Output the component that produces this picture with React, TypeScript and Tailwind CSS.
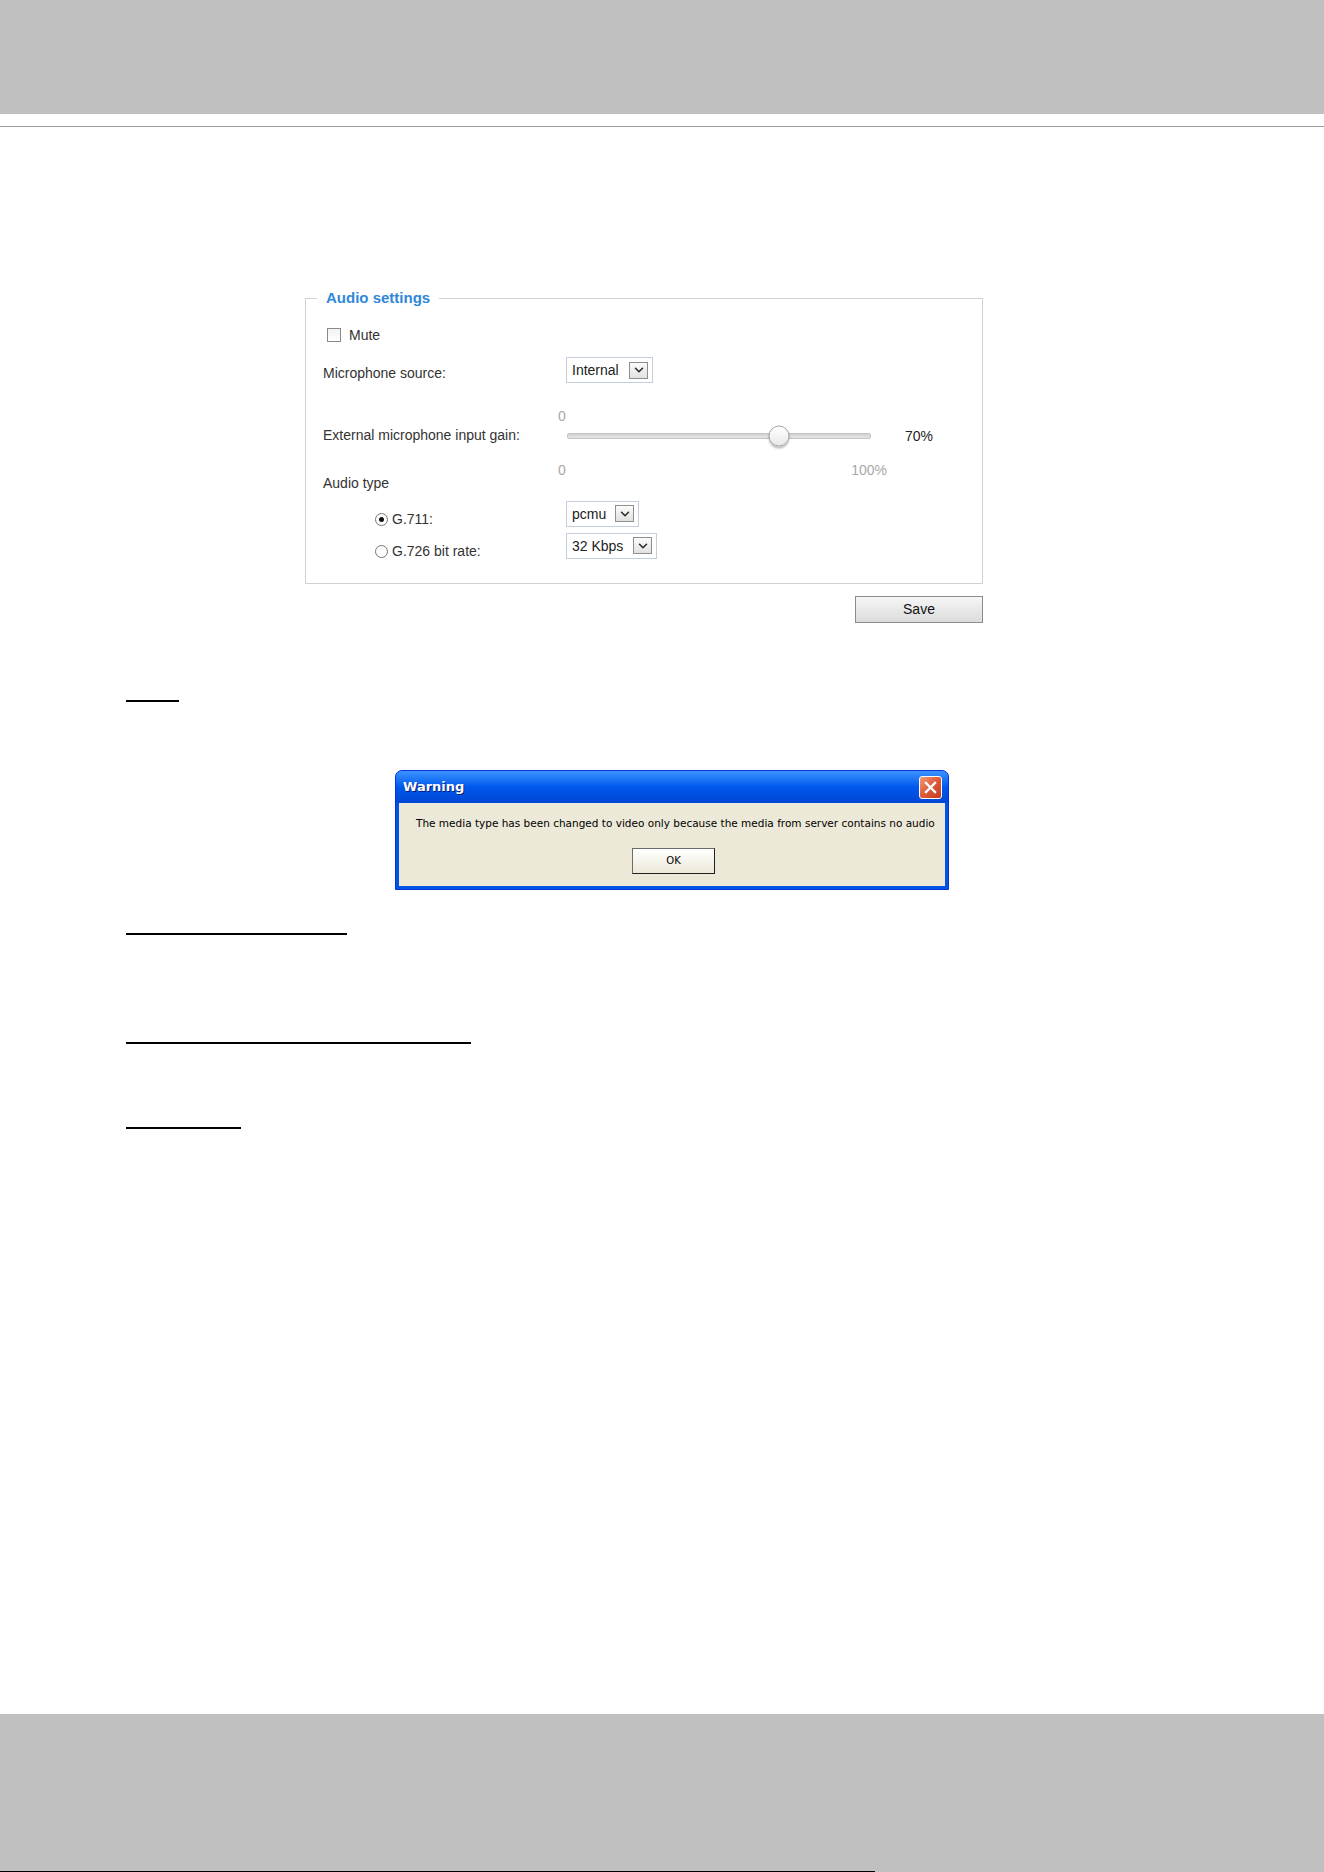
import { ChevronDown } from 'lucide-react'

const labelFont = { fontFamily: '"Liberation Sans", Arial, sans-serif' }

const DropButton = () => (
	<span className="flex h-[17px] w-[19px] items-center justify-center border border-[#8e8f8f] bg-gradient-to-b from-[#fbfbfb] to-[#e1e1e1]">
		<ChevronDown size={14} strokeWidth={2.6} className="text-[#2a2a2a]" />
	</span>
)

const Select = ({ value, width }: { value: string; width: string }) => (
	<div
		className={`flex h-[26px] items-center justify-between border border-[#c3cddc] bg-white pl-[5px] pr-[4px] text-[14px] text-[#222] ${width}`}
	>
		<span>{value}</span>
		<DropButton />
	</div>
)

const Radio = ({ checked }: { checked?: boolean }) => (
	<span className="flex h-[13px] w-[13px] items-center justify-center rounded-full border border-[#767676] bg-white">
		{checked && <span className="h-[5px] w-[5px] rounded-full bg-[#111]" />}
	</span>
)

const GainSlider = ({ value }: { value: number }) => (
	<div className="flex h-[24px] items-center">
		<div className="relative ml-[9px] h-[6px] w-[304px] rounded-[2px] border border-[#c4c4c4] bg-gradient-to-b from-[#d2d2d2] to-[#e6e6e6]">
			<span
				className="absolute top-1/2 h-[21px] w-[21px] -translate-x-1/2 -translate-y-1/2 rounded-full border border-[#a4a4a4] bg-gradient-to-b from-white to-[#e9e9e9] shadow-[0_2px_2px_rgba(0,0,0,0.25)]"
				style={{ left: `${value}%` }}
			/>
		</div>
		<span className="ml-[34px] text-[#222]">{value}%</span>
	</div>
)

const AudioSettings = () => (
	<div className="ml-[305px] w-[678px]" style={labelFont}>
		<fieldset className="border border-[#d2d2d2] pb-[24px] pl-[11px]">
			<legend className="px-[9px] text-[15px] font-bold leading-4 text-[#2f87d9]">
				Audio settings
			</legend>

			<div className="pl-[6px] text-[14px] leading-4 text-[#333]">
				<div className="mt-[19px] flex h-[20px] items-center">
					<span className="ml-[4px] h-[14px] w-[14px] border border-[#8a8a8a] bg-gradient-to-b from-[#f2f2f2] to-white" />
					<span className="ml-[8px]">Mute</span>
				</div>

				<div className="mt-[12px] flex items-center">
					<span className="mt-[6px] w-[243px]">Microphone source:</span>
					<Select value="Internal" width="w-[87px]" />
				</div>

				<div className="flex pt-[25px]">
					<div className="flex w-[235px] items-center pb-[16px]">
						<span>External microphone input gain:</span>
					</div>
					<div className="flex flex-col">
						<span className="text-[#a8a8a8]">0</span>
						<GainSlider value={70} />
						<div className="mt-[14px] flex w-[329px] justify-between text-[#a8a8a8]">
							<span>0</span>
							<span>100%</span>
						</div>
					</div>
				</div>

				<div className="-mt-[3px]">Audio type</div>

				<div className="mt-[9px] flex items-center">
					<div className="mt-[11px] flex w-[243px] items-center pl-[52px]">
						<Radio checked />
						<span className="ml-[4px]">G.711:</span>
					</div>
					<Select value="pcmu" width="w-[73px]" />
				</div>

				<div className="mt-[5px] flex items-center">
					<div className="mt-[11px] flex w-[243px] items-center pl-[52px]">
						<Radio />
						<span className="ml-[4px]">G.726 bit rate:</span>
					</div>
					<Select value="32 Kbps" width="w-[91px]" />
				</div>
			</div>
		</fieldset>

		<div className="mt-[12px] flex justify-end">
			<button className="h-[27px] w-[128px] border border-[#8c8c8c] bg-gradient-to-b from-[#f6f6f6] to-[#dcdcdc] text-[14px] text-[#111]">
				Save
			</button>
		</div>
	</div>
)

const WarningDialog = () => (
	<div className="ml-[395px] w-[554px] overflow-hidden rounded-t-[7px] border border-[#0831d9] bg-[#0055e5]">
		<div className="flex h-[32px] items-center justify-between bg-gradient-to-b from-[#3a93ff] via-[#0058ee] to-[#0046d4] pl-[7px] pr-[6px]">
			<span
				className="text-[13px] font-bold text-white [text-shadow:1px_1px_0_#0a1c78]"
				style={{ fontFamily: '"DejaVu Sans", Verdana, sans-serif' }}
			>
				Warning
			</span>
			<span className="flex h-[23px] w-[23px] items-center justify-center rounded-[3px] border border-white bg-gradient-to-br from-[#f09a7a] via-[#dd5a3a] to-[#c23a1f]">
				<svg width="13" height="13" viewBox="0 0 13 13">
					<path d="M2 2 L11 11 M11 2 L2 11" stroke="white" strokeWidth="2.4" strokeLinecap="square" />
				</svg>
			</span>
		</div>
		<div
			className="mx-[3px] mb-[3px] flex flex-col bg-[#ece9d8] pb-[12px] pl-[17px] pt-[13px] text-[10.5px] leading-[14px] text-black"
			style={{ fontFamily: '"DejaVu Sans", Tahoma, sans-serif' }}
		>
			<p>
				The media type has been changed to video only because the media from server contains no audio
			</p>
			<button className="mt-[18px] ml-[216px] h-[26px] w-[83px] border border-[#6b6b6b] border-b-[#1f1f1f] border-r-[#1f1f1f] bg-gradient-to-b from-white to-[#ece9d8] text-[10px] text-black">
				OK
			</button>
		</div>
	</div>
)

const App = () => {
	return (
		<div className="flex min-h-[1872px] w-[1324px] flex-col bg-white">
			<header className="h-[114px] bg-[#bfc0bf]" />
			<div className="mt-[12px] h-px bg-[#9b9b9b]" />

			<main className="mt-[163px] flex flex-col">
				<AudioSettings />

				<div className="ml-[126px] mt-[77px] h-[2px] w-[53px] bg-black" />
				<div className="mt-[68px]">
					<WarningDialog />
				</div>
				<div className="ml-[126px] mt-[43px] h-[2px] w-[221px] bg-black" />
				<div className="ml-[126px] mt-[107px] h-[2px] w-[345px] bg-black" />
				<div className="ml-[126px] mt-[83px] h-[2px] w-[115px] bg-black" />
			</main>

			<footer className="mt-auto flex h-[158px] flex-col justify-end bg-[#bfc0bf]">
				<div className="h-px w-[875px] bg-black" />
			</footer>
		</div>
	)
}

export default App
